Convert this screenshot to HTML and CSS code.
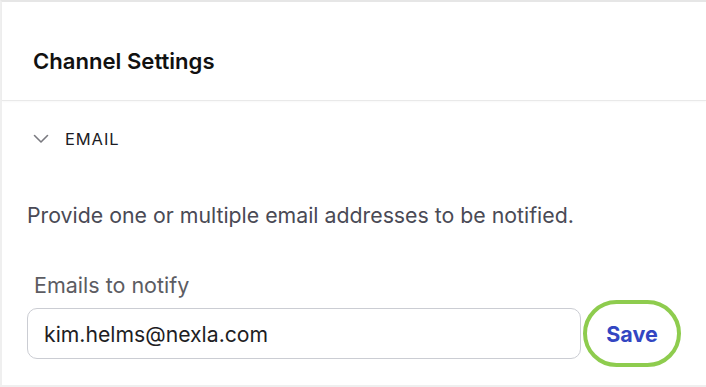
FILE: index.html
```html
<!DOCTYPE html>
<html>
<head>
<meta charset="utf-8">
<link rel="stylesheet" href="styles.css">
</head>
<body>
<div class="card">
  <div class="card-header">
    <h2 class="title">Channel Settings</h2>
  </div>
  <div class="section">
    <div class="section-toggle">
      <svg class="chevron" width="16" height="10" viewBox="0 0 16 10"><path d="M1.5 1.5 L8 8 L14.5 1.5" fill="none" stroke="#7a7a80" stroke-width="1.6" stroke-linecap="round" stroke-linejoin="round"/></svg>
      <span class="section-name">EMAIL</span>
    </div>
    <p class="desc">Provide one or multiple email addresses to be notified.</p>
    <label class="field-label">Emails to notify</label>
    <div class="field-row">
      <div class="input">kim.helms@nexla.com</div>
      <button class="save">Save</button>
    </div>
  </div>
</div>
</body>
</html>
```
FILE: styles.css
```css
html, body {
  margin: 0;
  padding: 0;
  background: #ffffff;
}
body {
  font-family: "Inter", "Noto Sans", sans-serif;
  width: 706px;
  height: 387px;
  overflow: hidden;
}
.card {
  border-top: 2px solid #e6e6e6;
  border-left: 2px solid #efefef;
  border-bottom: 2px solid #efefef;
  box-sizing: border-box;
  height: 387px;
}
.card-header {
  padding: 48px 31px 28px;
  border-bottom: 1px solid #e9e9e9;
  box-shadow: 0 1px 2px rgba(0,0,0,0.03);
}
.title {
  margin: 0;
  font-size: 22.1px;
  line-height: 22px;
  font-weight: 600;
  color: #111;
}
.section {
  padding: 26px 0 0 25px;
}
.section-toggle {
  display: flex;
  align-items: center;
  height: 24px;
  padding-left: 6px;
}
.chevron {
  margin-right: 16px;
}
.section-name {
  font-size: 16.5px;
  color: #1c1c24;
  letter-spacing: 0.9px;
}
.desc {
  margin: 52px 0 0;
  font-size: 21.3px;
  line-height: 24px;
  color: #4a4a55;
}
.field-label {
  display: block;
  margin: 46px 0 0 7px;
  font-size: 21.5px;
  line-height: 24px;
  color: #5c5c62;
}
.field-row {
  display: flex;
  align-items: center;
  margin-top: 3px;
}
.input {
  width: 554px;
  height: 51px;
  box-sizing: border-box;
  border: 1px solid #cbcdd3;
  border-radius: 10px;
  padding: 0 16px;
  display: flex;
  align-items: center;
  font-size: 21.2px;
  color: #1e1e24;
}
.save {
  margin-left: 2px;
  width: 98px;
  height: 67px;
  border: 4px solid #8ecc4e;
  border-radius: 34px;
  background: #fff;
  font-family: inherit;
  font-size: 21.5px;
  font-weight: 700;
  color: #3346c2;
  padding: 0;
}
```
